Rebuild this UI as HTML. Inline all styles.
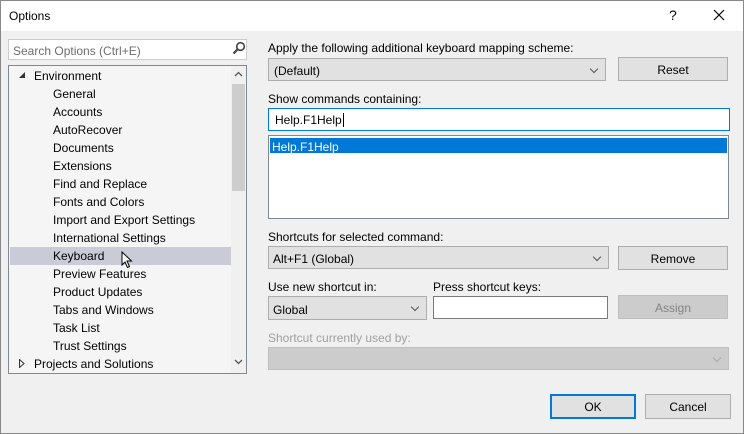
<!DOCTYPE html>
<html><head><style>
*{box-sizing:border-box;margin:0;padding:0}
body{width:744px;height:434px;background:#f0f0f0;font-family:"Liberation Sans",sans-serif;font-size:12px;color:#000;position:relative;overflow:hidden}
.a{position:absolute}
.title{left:0;top:0;width:744px;height:31px;background:#fff}
.lbl{white-space:nowrap;margin-top:1px}
.combo{background:#e1e1e1;border:1px solid #adadad}
.combo span.a{margin-top:1px}
.btn{background:#e1e1e1;border:1px solid #adadad;text-align:center;padding-top:1px}
.chev{position:absolute;right:8px;top:7px;width:6px;height:6px;border-right:1px solid #555;border-bottom:1px solid #555;transform:rotate(45deg)}
.tree div{position:absolute;height:18px;line-height:20px;white-space:nowrap}
</style></head><body>
<div class="a title"></div>
<div class="a lbl" style="left:9px;top:8px;font-size:12px">Options</div>
<div class="a lbl" style="left:669px;top:6px;font-size:14px">?</div>
<svg class="a" style="left:713px;top:9px" width="12" height="12"><path d="M1 1L11 11M11 1L1 11" stroke="#000" stroke-width="1.2"/></svg>

<div class="a" style="left:8px;top:39px;width:239px;height:21px;background:#fff;border:1px solid #ccc"></div>
<div class="a lbl" style="left:13px;top:43px;color:#6d6d6d">Search Options (Ctrl+E)</div>
<svg class="a" style="left:232px;top:41px" width="14" height="16"><circle cx="8.5" cy="5.5" r="3.8" fill="none" stroke="#444" stroke-width="1.6"/><path d="M5.5 8.5L1.5 12.5" stroke="#444" stroke-width="2.2"/></svg>

<div class="a" style="left:8px;top:65px;width:239px;height:309px;background:#f5f5f5;border:1px solid #828790"></div>
<div class="a" style="left:231px;top:66px;width:15px;height:307px;background:#f0f0f0"></div>
<div class="a" style="left:232px;top:84px;width:13px;height:107px;background:#cdcdcd"></div>
<svg class="a" style="left:234px;top:71px" width="9" height="6"><path d="M1 5L4.5 1.5L8 5" fill="none" stroke="#555" stroke-width="1.3"/></svg>
<svg class="a" style="left:234px;top:359px" width="9" height="6"><path d="M1 1L4.5 4.5L8 1" fill="none" stroke="#555" stroke-width="1.3"/></svg>
<div class="a" style="left:10px;top:247px;width:221px;height:18px;background:#cbcbd7"></div>
<svg class="a" style="left:19px;top:72px" width="6" height="6"><path d="M6 0L6 6L0 6Z" fill="#333"/></svg>
<svg class="a" style="left:19px;top:359px" width="6" height="9"><path d="M0.5 0.5L5 4.5L0.5 8.5Z" fill="none" stroke="#333"/></svg>
<div class="tree">
<div style="left:34px;top:66px">Environment</div>
<div style="left:53px;top:84px">General</div>
<div style="left:53px;top:102px">Accounts</div>
<div style="left:53px;top:120px">AutoRecover</div>
<div style="left:53px;top:138px">Documents</div>
<div style="left:53px;top:156px">Extensions</div>
<div style="left:53px;top:174px">Find and Replace</div>
<div style="left:53px;top:192px">Fonts and Colors</div>
<div style="left:53px;top:210px">Import and Export Settings</div>
<div style="left:53px;top:228px">International Settings</div>
<div style="left:53px;top:246px">Keyboard</div>
<div style="left:53px;top:264px">Preview Features</div>
<div style="left:53px;top:282px">Product Updates</div>
<div style="left:53px;top:300px">Tabs and Windows</div>
<div style="left:53px;top:318px">Task List</div>
<div style="left:53px;top:336px">Trust Settings</div>
<div style="left:34px;top:354px">Projects and Solutions</div>
</div>
<svg class="a" style="left:121px;top:251px" width="12" height="18"><path d="M1 1L1 14L4 11L6.5 16.5L8.5 15.5L6 10L10.5 10Z" fill="#fff" stroke="#000"/></svg>

<div class="a lbl" style="left:268px;top:40px">Apply the following additional keyboard mapping scheme:</div>
<div class="a combo" style="left:268px;top:58px;width:338px;height:23px"><span class="a" style="left:5px;top:4px">(Default)</span><span class="chev"></span></div>
<div class="a btn" style="left:618px;top:57px;width:110px;height:24px;line-height:22px">Reset</div>

<div class="a lbl" style="left:268px;top:91px">Show commands containing:</div>
<div class="a" style="left:268px;top:108px;width:462px;height:23px;background:#fff;border:1px solid #0078d7"></div>
<div class="a lbl" style="left:275px;top:112px">Help.F1Help<span style="border-left:1px solid #000;margin-left:1px"></span></div>
<div class="a" style="left:268px;top:135px;width:461px;height:84px;background:#fff;border:1px solid #828790"></div>
<div class="a" style="left:270px;top:138px;width:457px;height:15px;background:#0078d7"></div>
<div class="a lbl" style="left:272px;top:139px;color:#fff">Help.F1Help</div>

<div class="a lbl" style="left:268px;top:229px">Shortcuts for selected command:</div>
<div class="a combo" style="left:268px;top:246px;width:341px;height:23px"><span class="a" style="left:4px;top:4px">Alt+F1 (Global)</span><span class="chev"></span></div>
<div class="a btn" style="left:618px;top:246px;width:110px;height:24px;line-height:22px">Remove</div>

<div class="a lbl" style="left:268px;top:279px">Use new shortcut in:</div>
<div class="a lbl" style="left:433px;top:279px">Press shortcut keys:</div>
<div class="a combo" style="left:268px;top:296px;width:159px;height:24px"><span class="a" style="left:4px;top:5px">Global</span><span class="chev"></span></div>
<div class="a" style="left:433px;top:296px;width:175px;height:23px;background:#fff;border:1px solid #7a7a7a"></div>
<div class="a btn" style="left:618px;top:295px;width:110px;height:24px;line-height:22px;background:#ccc;border-color:#bfbfbf;color:#838383">Assign</div>

<div class="a lbl" style="left:268px;top:330px;color:#a0a0a0">Shortcut currently used by:</div>
<div class="a" style="left:268px;top:347px;width:461px;height:23px;background:#ccc;border:1px solid #bfbfbf"><span class="chev" style="border-color:#aaa"></span></div>

<div class="a btn" style="left:550px;top:394px;width:86px;height:25px;line-height:21px;border:2px solid #0078d7">OK</div>
<div class="a btn" style="left:645px;top:394px;width:86px;height:25px;line-height:23px">Cancel</div>
<div class="a" style="left:0;top:0;width:744px;height:434px;border:1px solid #888;pointer-events:none"></div>
</body></html>
